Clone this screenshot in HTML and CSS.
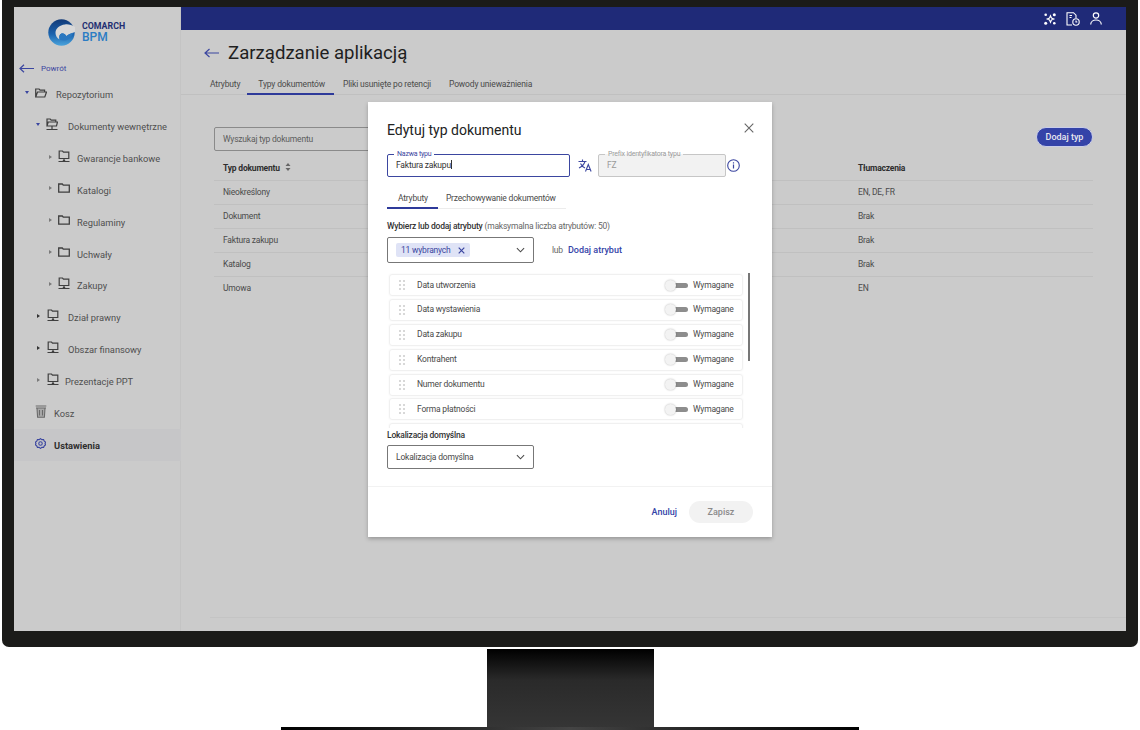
FILE: index.html
```html
<!DOCTYPE html>
<html lang="pl">
<head>
    <meta charset="UTF-8">
    <title>Comarch BPM</title>
    <link rel="stylesheet" href="styles.css">
</head>
<body>
<svg class="defs" width="0" height="0">
    <symbol id="pc" viewBox="0 0 12 13"><path d="M1.2 8.5V1h3.3l1 1.2h5.300v6.300zM6 8.500v2.500M.5 11.500h11M4.800 10.500h2.400" fill="none" stroke="currentColor" stroke-width="1.2"/></symbol>
    <symbol id="folder" viewBox="0 0 12 10"><path d="M.7 1h3.600l1 1.200h6v7H.7z" fill="none" stroke="currentColor" stroke-width="1.3"/></symbol>
    <symbol id="chev" viewBox="0 0 10 6"><path d="M1 1l4 4 4-4" fill="none" stroke="currentColor" stroke-width="1.2"/></symbol>
    <symbol id="grip" viewBox="0 0 6 10"><g fill="#d8d8d8"><rect width="2" height="2" x="0" y="0"/><rect width="2" height="2" x="4" y="0"/><rect width="2" height="2" x="0" y="4"/><rect width="2" height="2" x="4" y="4"/><rect width="2" height="2" x="0" y="8"/><rect width="2" height="2" x="4" y="8"/></g></symbol>
</svg>

<div class="monitor">
    <div class="screen">

        <!-- menu boczne -->
        <aside class="sidebar">
            <div class="logo">
                <svg width="27" height="27" viewBox="0 0 27 27">
                    <defs>
                        <linearGradient id="lg" x1="0" y1="0" x2="0" y2="1">
                            <stop offset="0" stop-color="#123a78"/>
                            <stop offset="0.55" stop-color="#1a62ad"/>
                            <stop offset="1" stop-color="#4aa3dc"/>
                        </linearGradient>
                    </defs>
                    <circle cx="13.5" cy="13.5" r="13.2" fill="url(#lg)"/>
                    <path d="M27 8c-3-2-7-3-10-2.500C11.500 6 7.500 9.500 7.500 14c0 2.500 1.500 5 4 6.500-1-3 0-5.500 2-6 2.500-.5 4 1 5 3 1-1.500 2.500-2.500 4.500-3 1.500-.5 3-1 4-1.500z" fill="#d8d8d8"/>
                    <path d="M11.500 20.500c3 1.500 6.500 1.500 9-.5 2.500-2 4-4 5-6.500-2.500 1-5 1.500-7 3.500-1.500-2-3-3-5-2.500-1.500.5-2.500 3-2 6z" fill="#2a78c0"/>
                </svg>
                <div class="logo-text"><span class="logo-top">COMARCH</span><span class="logo-bpm">BPM</span></div>
            </div>
            <div class="back-link">
                <svg width="15" height="9" viewBox="0 0 15 9"><path d="M15 4.500H1M5 .7L1 4.500l4 3.800" fill="none" stroke="#3b46a0" stroke-width="1.2"/></svg>
                <span>Powrót</span>
            </div>
            <nav class="tree">
                <div class="tree-row lvl1"><i class="caret open"></i><svg class="ico" width="12" height="10" viewBox="0 0 12 10"><path d="M.7 9V1h3.400l1 1.200h4.500V4M.7 9l1.800-5h9L9.800 9z" fill="none" stroke="currentColor" stroke-width="1.2"/></svg><span class="lbl">Repozytorium</span></div>
                <div class="tree-row lvl2"><i class="caret open"></i><svg class="ico" width="12" height="13" viewBox="0 0 12 13"><path d="M1 8V1h3.200l1 1.200h4.600V4M1 8l1.200-4h9.300l-1 4zM6 8v3M.5 11.500h11" fill="none" stroke="currentColor" stroke-width="1.2"/></svg><span class="lbl">Dokumenty wewnętrzne</span></div>
                <div class="tree-row lvl3"><i class="caret"></i><svg class="ico" width="12" height="13"><use href="#pc"/></svg><span class="lbl">Gwarancje bankowe</span></div>
                <div class="tree-row lvl3"><i class="caret"></i><svg class="ico" width="12" height="10"><use href="#folder"/></svg><span class="lbl">Katalogi</span></div>
                <div class="tree-row lvl3"><i class="caret"></i><svg class="ico" width="12" height="10"><use href="#folder"/></svg><span class="lbl">Regulaminy</span></div>
                <div class="tree-row lvl3"><i class="caret"></i><svg class="ico" width="12" height="10"><use href="#folder"/></svg><span class="lbl">Uchwały</span></div>
                <div class="tree-row lvl3"><i class="caret"></i><svg class="ico" width="12" height="13"><use href="#pc"/></svg><span class="lbl">Zakupy</span></div>
                <div class="tree-row lvl2b"><i class="caret dark"></i><svg class="ico" width="12" height="13"><use href="#pc"/></svg><span class="lbl">Dział prawny</span></div>
                <div class="tree-row lvl2b"><i class="caret dark"></i><svg class="ico" width="12" height="13"><use href="#pc"/></svg><span class="lbl">Obszar finansowy</span></div>
                <div class="tree-row lvl2b short"><i class="caret"></i><svg class="ico" width="12" height="13"><use href="#pc"/></svg><span class="lbl">Prezentacje PPT</span></div>
                <div class="tree-row top-item">
                    <svg class="ico trash" width="12" height="13" viewBox="0 0 12 13"><path d="M2 3l.6 9.300h6.800L10 3z" fill="#a9a9a9"/><path d="M.7 1h10.600M1 3h10M2 3l.6 9.300h6.800L10 3M4.500 5v5.500M7.500 5v5.500" fill="none" stroke="#6a6a6a" stroke-width="1.1"/></svg><span class="lbl">Kosz</span>
                </div>
                <div class="tree-row top-item active">
                    <svg class="ico gear" width="11" height="11" viewBox="0 0 12 12"><path d="M6 .7l1.500 1.100 1.800-.1.800 1.700 1.400 1.100-.5 1.500.5 1.500-1.400 1.100-.8 1.700-1.800-.1L6 11.300l-1.500-1.100-1.800.1-.8-1.700L.5 7.500 1 6 .5 4.500l1.400-1.100.8-1.700 1.800.1z" fill="none" stroke="#3b46a0" stroke-width="1.3"/><circle cx="6" cy="6" r="1.900" fill="none" stroke="#3b46a0" stroke-width="1.2"/></svg><span class="lbl">Ustawienia</span>
                </div>
            </nav>
        </aside>

        <!-- czesc glowna -->
        <div class="main">
            <div class="topbar">
                <svg width="12" height="12" viewBox="0 0 12 12"><path d="M6.500 2.700l1 2.300 2.300 1-2.300 1-1 2.300-1-2.300-2.300-1 2.300-1z" fill="none" stroke="#fff" stroke-width="1.1"/><g fill="#fff"><circle cx="10.300" cy="1.700" r="1.500"/><circle cx="1.700" cy="10.300" r="1.500"/><circle cx="1.700" cy="1.700" r="1.300"/><circle cx="10.300" cy="10.300" r="1.300"/></g></svg>
                <svg width="14" height="14" viewBox="0 0 14 14"><g fill="none" stroke="#fff" stroke-width="1.1"><path d="M6 13H1V.7h6.500L10 3.200V6"/><path d="M3.500 3.500H6M3.500 5.500h2"/><circle cx="10" cy="10" r="3.200"/><path d="M10 8.500V10h1.300"/></g></svg>
                <svg width="12" height="13" viewBox="0 0 12 13"><g fill="none" stroke="#fff" stroke-width="1.2"><circle cx="6" cy="3.500" r="2.700"/><path d="M.7 12.500c0-6 10.600-6 10.600 0"/></g></svg>
            </div>
            <div class="page-head">
                <svg width="15" height="10" viewBox="0 0 15 10"><path d="M15 5H1M5.500 1L1 5l4.500 4" fill="none" stroke="#3b46a0" stroke-width="1.2"/></svg>
                <h1>Zarządzanie aplikacją</h1>
            </div>
            <div class="tabs">
                <span class="tab">Atrybuty</span>
                <span class="tab active">Typy dokumentów</span>
                <span class="tab">Pliki usunięte po retencji</span>
                <span class="tab">Powody unieważnienia</span>
            </div>
            <div class="content">
                <div class="toolbar">
                    <div class="search">Wyszukaj typ dokumentu</div>
                    <button class="add-btn">Dodaj typ</button>
                </div>
                <div class="table">
                    <div class="t-row t-head"><span>Typ dokumentu <svg class="sort" width="6" height="8" viewBox="0 0 6 8"><path d="M3 0l2.500 3h-5zM3 8L.5 5h5z" fill="#666"/></svg></span><span>Tłumaczenia</span></div>
                    <div class="t-row"><span>Nieokreślony</span><span>EN, DE, FR</span></div>
                    <div class="t-row"><span>Dokument</span><span>Brak</span></div>
                    <div class="t-row"><span>Faktura zakupu</span><span>Brak</span></div>
                    <div class="t-row"><span>Katalog</span><span>Brak</span></div>
                    <div class="t-row last"><span>Umowa</span><span>EN</span></div>
                </div>
            </div>
            <div class="foot-line"></div>
        </div>

        <!-- okno edycji -->
        <div class="modal">
            <div class="modal-head">
                <h2>Edytuj typ dokumentu</h2>
                <svg width="10" height="10" viewBox="0 0 10 10"><path d="M.7.7l8.600 8.600M9.300.7L.7 9.300" stroke="#666" stroke-width="1.1"/></svg>
            </div>
            <div class="field-row">
                <div class="field name"><label>Nazwa typu</label><span>Faktura zakupu</span><i class="cursor"></i></div>
                <svg class="translate" width="14" height="13" viewBox="0 0 14 13"><g fill="none" stroke="#3b46a0" stroke-width="1.1"><path d="M.5 2.500h8M4.500.5v2M7 2.500C6 5.500 4 7.500 1 9M2.500 4.500c1 2 2.500 3.500 4.500 4.500M7.500 12.500l2.800-7 2.800 7M8.500 10.500h3.600"/></g></svg>
                <div class="field prefix"><label>Prefix identyfikatora typu</label><span>FZ</span></div>
                <svg class="info" width="13" height="13" viewBox="0 0 13 13"><circle cx="6.500" cy="6.500" r="5.800" fill="none" stroke="#3b46a0" stroke-width="1.1"/><path d="M6.500 5.500v4M6.500 3.300v1.200" stroke="#3b46a0" stroke-width="1.2"/></svg>
            </div>
            <div class="m-tabs">
                <span class="m-tab active">Atrybuty</span>
                <span class="m-tab">Przechowywanie dokumentów</span>
            </div>
            <p class="attr-label"><strong>Wybierz lub dodaj atrybuty</strong> (maksymalna liczba atrybutów: 50)</p>
            <div class="attr-select">
                <div class="select">
                    <span class="chip">11 wybranych <svg width="7" height="7" viewBox="0 0 7 7"><path d="M.7.7l5.600 5.600M6.300.7L.7 6.300" stroke="#3b46a0" stroke-width="1.2"/></svg></span>
                    <svg width="9" height="6"><use href="#chev"/></svg>
                </div>
                <span class="or">lub</span>
                <span class="add-attr">Dodaj atrybut</span>
            </div>
            <div class="attr-list">
                <div class="attr"><svg width="6" height="10"><use href="#grip"/></svg><span class="attr-name">Data utworzenia</span><i class="switch"></i><span class="req">Wymagane</span></div>
                <div class="attr"><svg width="6" height="10"><use href="#grip"/></svg><span class="attr-name">Data wystawienia</span><i class="switch"></i><span class="req">Wymagane</span></div>
                <div class="attr"><svg width="6" height="10"><use href="#grip"/></svg><span class="attr-name">Data zakupu</span><i class="switch"></i><span class="req">Wymagane</span></div>
                <div class="attr"><svg width="6" height="10"><use href="#grip"/></svg><span class="attr-name">Kontrahent</span><i class="switch"></i><span class="req">Wymagane</span></div>
                <div class="attr"><svg width="6" height="10"><use href="#grip"/></svg><span class="attr-name">Numer dokumentu</span><i class="switch"></i><span class="req">Wymagane</span></div>
                <div class="attr"><svg width="6" height="10"><use href="#grip"/></svg><span class="attr-name">Forma płatności</span><i class="switch"></i><span class="req">Wymagane</span></div>
                <div class="attr"></div>
                <div class="scroll-thumb"></div>
            </div>
            <p class="loc-label">Lokalizacja domyślna</p>
            <div class="select loc">
                <span>Lokalizacja domyślna</span>
                <svg width="9" height="6"><use href="#chev"/></svg>
            </div>
            <div class="modal-foot">
                <span class="cancel">Anuluj</span>
                <button class="save">Zapisz</button>
            </div>
        </div>
    </div>
</div>

<div class="stand"></div>
<div class="base"></div>
</body>
</html>
```

FILE: styles.css
```css
html, body {
    margin: 0;
    height: 730px;
    overflow: hidden;
    background: #fff;
    font-family: Roboto, "Liberation Sans", sans-serif;
}
.defs {
    position: absolute;
}

/* monitor */
.monitor {
    margin: 0 2px;
    height: 647px;
    box-sizing: border-box;
    padding: 7px 12px 16px;
    background: #1b1b19;
    border-radius: 0 0 7px 7px;
}
.screen {
    position: relative;
    display: flex;
    height: 624px;
    background: #cbcbcb;
}
.stand {
    width: 167px;
    height: 78px;
    margin: 2px auto 0;
    background: linear-gradient(#000, #2a2a2a 40%, #353535);
}
.base {
    width: 578px;
    height: 3px;
    margin: 0 auto;
    background: linear-gradient(90deg, #000, #444 50%, #000);
}

/* sidebar */
.sidebar {
    width: 166px;
    flex: none;
    border-right: 1px solid #c4c4c4;
    color: #4a4a4a;
}
.logo {
    display: flex;
    align-items: center;
    gap: 7px;
    padding: 12px 0 0 34px;
}
.logo-text {
    display: flex;
    flex-direction: column;
    font-weight: 700;
}
.logo-top {
    font-size: 8.8px;
    line-height: 10px;
    color: #1f2f72;
}
.logo-bpm {
    font-size: 12px;
    line-height: 13px;
    font-weight: 500;
    color: #2a7cc4;
}
.back-link {
    display: flex;
    align-items: center;
    gap: 7px;
    height: 12px;
    margin-top: 16px;
    padding-left: 5px;
    font-size: 8px;
    color: #3b46a0;
}
.tree {
    margin-top: 5px;
}
.tree-row {
    display: flex;
    align-items: center;
    height: 31.85px;
    font-size: 9.3px;
    color: #4f4f4f;
}
.ico {
    flex: none;
    color: #3f3f3f;
    margin-top: -4px;
}
.caret {
    flex: none;
    width: 0;
    height: 0;
    margin-top: -4px;
    border-top: 2.5px solid transparent;
    border-bottom: 2.5px solid transparent;
    border-left: 3px solid #7a7a7a;
}
.caret.dark {
    border-left-color: #333;
}
.caret.open {
    border-left: 2.5px solid transparent;
    border-right: 2.5px solid transparent;
    border-top: 3px solid #3b46a0;
    border-bottom: 0;
}
.lvl1 { padding-left: 11px; }
.lvl1 .ico { margin-left: 6px; }
.lvl1 .lbl { margin-left: 9px; }
.lvl2 { padding-left: 22px; }
.lvl2 .ico { margin-left: 6px; }
.lvl2 .lbl { margin-left: 10px; }
.lvl3 { padding-left: 35px; }
.lvl3 .ico { margin-left: 6px; }
.lvl3 .lbl { margin-left: 7px; }
.lvl2b { padding-left: 23px; }
.lvl2b .ico { margin-left: 7px; }
.lvl2b .lbl { margin-left: 9px; }
.lvl2b.short .lbl { margin-left: 6px; }
.top-item { padding-left: 21px; }
.top-item .lbl { margin-left: 7px; }
.top-item .gear + .lbl { margin-left: 8px; }
.tree-row.active {
    margin-right: -1px;
    background: #c6c6c8;
    color: #2e2e2e;
    font-weight: 700;
}

/* main */
.main {
    flex: 1;
    min-width: 0;
    display: flex;
    flex-direction: column;
}
.topbar {
    display: flex;
    justify-content: flex-end;
    align-items: center;
    gap: 10px;
    height: 23px;
    padding-right: 24px;
    background: #1f2a78;
}
.page-head {
    display: flex;
    align-items: center;
    gap: 9px;
    height: 46px;
    padding-left: 23px;
}
.page-head h1 {
    margin: 0;
    font-size: 18.6px;
    font-weight: 400;
    color: #1f1f1f;
}
.tabs {
    display: flex;
    height: 18px;
    padding-left: 20px;
    border-bottom: 1px solid #c0c0c0;
    font-size: 8.5px;
    letter-spacing: -0.15px;
    color: #4a4a4a;
}
.tab {
    padding: 3px 9px 0;
}
.tab:first-child {
    padding-right: 7px;
}
.tab.active {
    box-sizing: border-box;
    height: 19px;
    padding-left: 11px;
    border-bottom: 2px solid #2e3a9a;
}
.content {
    flex: 1;
    padding: 32px 33px 0;
}
.toolbar {
    display: flex;
    justify-content: space-between;
    align-items: flex-start;
    height: 30px;
}
.search {
    width: 300px;
    height: 22px;
    line-height: 22px;
    border: 1px solid #8a8a8a;
    border-radius: 2px;
    padding-left: 8px;
    font-size: 8.5px;
    letter-spacing: -0.2px;
    color: #5c5c5c;
}
.add-btn {
    width: 57px;
    height: 20px;
    padding: 0;
    border: 1px solid #c9cdea;
    border-radius: 10px;
    background: #3443a8;
    color: #e8e8ef;
    font: 500 9px Roboto, sans-serif;
}
.t-row {
    display: flex;
    justify-content: space-between;
    align-items: center;
    height: 22px;
    padding: 0 0 1px 9px;
    border-bottom: 1px solid #c0c0c0;
    font-size: 8.5px;
    letter-spacing: -0.2px;
    color: #4a4a4a;
}
.t-row span:last-child {
    width: 235px;
}
.t-head {
    font-weight: 700;
    color: #2e2e2e;
}
.sort {
    margin-left: 3px;
}
.t-row.last {
    border-bottom: 0;
}
.foot-line {
    height: 1px;
    margin: 0 0 13px 29px;
    background: #c4c4c4;
}

/* modal */
.modal {
    position: absolute;
    left: 354px;
    top: 95px;
    width: 404px;
    height: 435px;
    box-sizing: border-box;
    padding: 0 19px;
    background: #fff;
    box-shadow: 0 2px 4px rgba(0, 0, 0, 0.25);
    color: #4a4a4a;
}
.modal-head {
    display: flex;
    justify-content: space-between;
    align-items: center;
    height: 52px;
}
.modal-head h2 {
    margin: 4px 0 0;
    font-size: 14px;
    font-weight: 400;
    color: #222;
}
.modal-head svg {
    margin: 0 -1px 0 0;
}
.field-row {
    display: flex;
    align-items: center;
}
.field {
    position: relative;
    box-sizing: border-box;
    height: 23px;
    line-height: 21px;
    padding-left: 8px;
    border-radius: 2px;
    font-size: 8.5px;
    letter-spacing: -0.2px;
}
.field label {
    position: absolute;
    top: -5px;
    left: 6px;
    padding: 0 3px;
    background: #fff;
    font-size: 7px;
    line-height: 9px;
}
.field.name {
    width: 183px;
    border: 1.5px solid #3b46a0;
    color: #333;
}
.field.name label {
    color: #3b46a0;
}
.cursor {
    display: inline-block;
    width: 1px;
    height: 9px;
    vertical-align: -1px;
    background: #333;
}
.translate {
    margin: 0 6px 0 8px;
}
.field.prefix {
    width: 128px;
    border: 1px solid #c6c6c6;
    background: #f2f2f2;
    color: #9a9a9a;
}
.field.prefix label {
    color: #9a9a9a;
    background: linear-gradient(#fff 50%, #f2f2f2 50%);
}
.info {
    margin-left: 1px;
}
.m-tabs {
    display: flex;
    width: 179px;
    height: 32px;
    box-sizing: border-box;
    border-bottom: 1px solid #ececec;
    font-size: 8.5px;
    letter-spacing: -0.2px;
    color: #4a4a4a;
    white-space: nowrap;
}
.m-tab {
    padding: 16px 8px 0;
}
.m-tab.active {
    box-sizing: border-box;
    height: 32px;
    padding: 16px 10px 0 11px;
    border-bottom: 2px solid #2e3a9a;
}
.attr-label {
    margin: 11px 0 0;
    font-size: 8.5px;
    letter-spacing: -0.2px;
    line-height: 12px;
    color: #666;
}
.attr-label strong {
    font-weight: 500;
    color: #333;
}
.attr-select {
    display: flex;
    align-items: center;
    margin-top: 5px;
    font-size: 8.5px;
    letter-spacing: -0.2px;
}
.select {
    display: flex;
    justify-content: space-between;
    align-items: center;
    box-sizing: border-box;
    width: 147px;
    height: 26px;
    padding: 0 8px;
    border: 1px solid #777;
    border-radius: 2px;
    color: #4a4a4a;
}
.chip {
    display: flex;
    align-items: center;
    gap: 7px;
    height: 14px;
    padding: 0 5px;
    background: #dfe3f6;
    border-radius: 2px;
    color: #3b46a0;
}
.or {
    margin-left: 18px;
    color: #666;
}
.add-attr {
    margin-left: 5px;
    font-size: 9px;
    letter-spacing: 0;
    font-weight: 500;
    color: #3443a8;
}
.attr-list {
    position: relative;
    height: 154px;
    margin-top: 10px;
    padding: 1px 0 0 2px;
    overflow: hidden;
}
.attr {
    display: flex;
    align-items: center;
    box-sizing: border-box;
    width: 354px;
    height: 22px;
    margin-bottom: 2.9px;
    padding-right: 9px;
    border: 1px solid #f0f0f0;
    border-radius: 3px;
    font-size: 8.5px;
    letter-spacing: -0.2px;
    box-shadow: 0 0 2px rgba(0, 0, 0, 0.05);
}
.attr svg {
    margin-left: 9px;
}
.attr-name {
    flex: 1;
    margin-left: 12px;
    padding-bottom: 1px;
}
.switch {
    position: relative;
    width: 22px;
    height: 5px;
    margin-right: 5px;
    border-radius: 3px;
    background: #8d8d8d;
}
.switch::before {
    content: "";
    position: absolute;
    left: -1px;
    top: -3px;
    width: 11px;
    height: 11px;
    border-radius: 50%;
    background: #f3f3f3;
    box-shadow: 0 0 2px rgba(0, 0, 0, 0.3);
}
.req {
    width: 40px;
    padding-bottom: 1px;
    white-space: nowrap;
}
.scroll-thumb {
    position: absolute;
    left: 361px;
    top: 0;
    width: 2px;
    height: 88px;
    background: #777;
}
.loc-label {
    margin: 0;
    padding-top: 1px;
    font-size: 8.5px;
    letter-spacing: -0.2px;
    font-weight: 500;
    line-height: 12px;
    color: #333;
}
.select.loc {
    height: 24px;
    margin-top: 4px;
    font-size: 8.5px;
    letter-spacing: -0.2px;
}
.modal-foot {
    display: flex;
    justify-content: flex-end;
    align-items: center;
    gap: 12px;
    height: 50px;
    margin: 17px -19px 0;
    padding-right: 19px;
    border-top: 1px solid #f2f2f2;
}
.cancel {
    font-size: 9px;
    font-weight: 500;
    color: #3443a8;
}
.save {
    width: 64px;
    height: 22px;
    padding: 0;
    border: 0;
    border-radius: 11px;
    background: #f2f2f2;
    color: #8a8a8a;
    font: 500 9px Roboto, sans-serif;
}
```
